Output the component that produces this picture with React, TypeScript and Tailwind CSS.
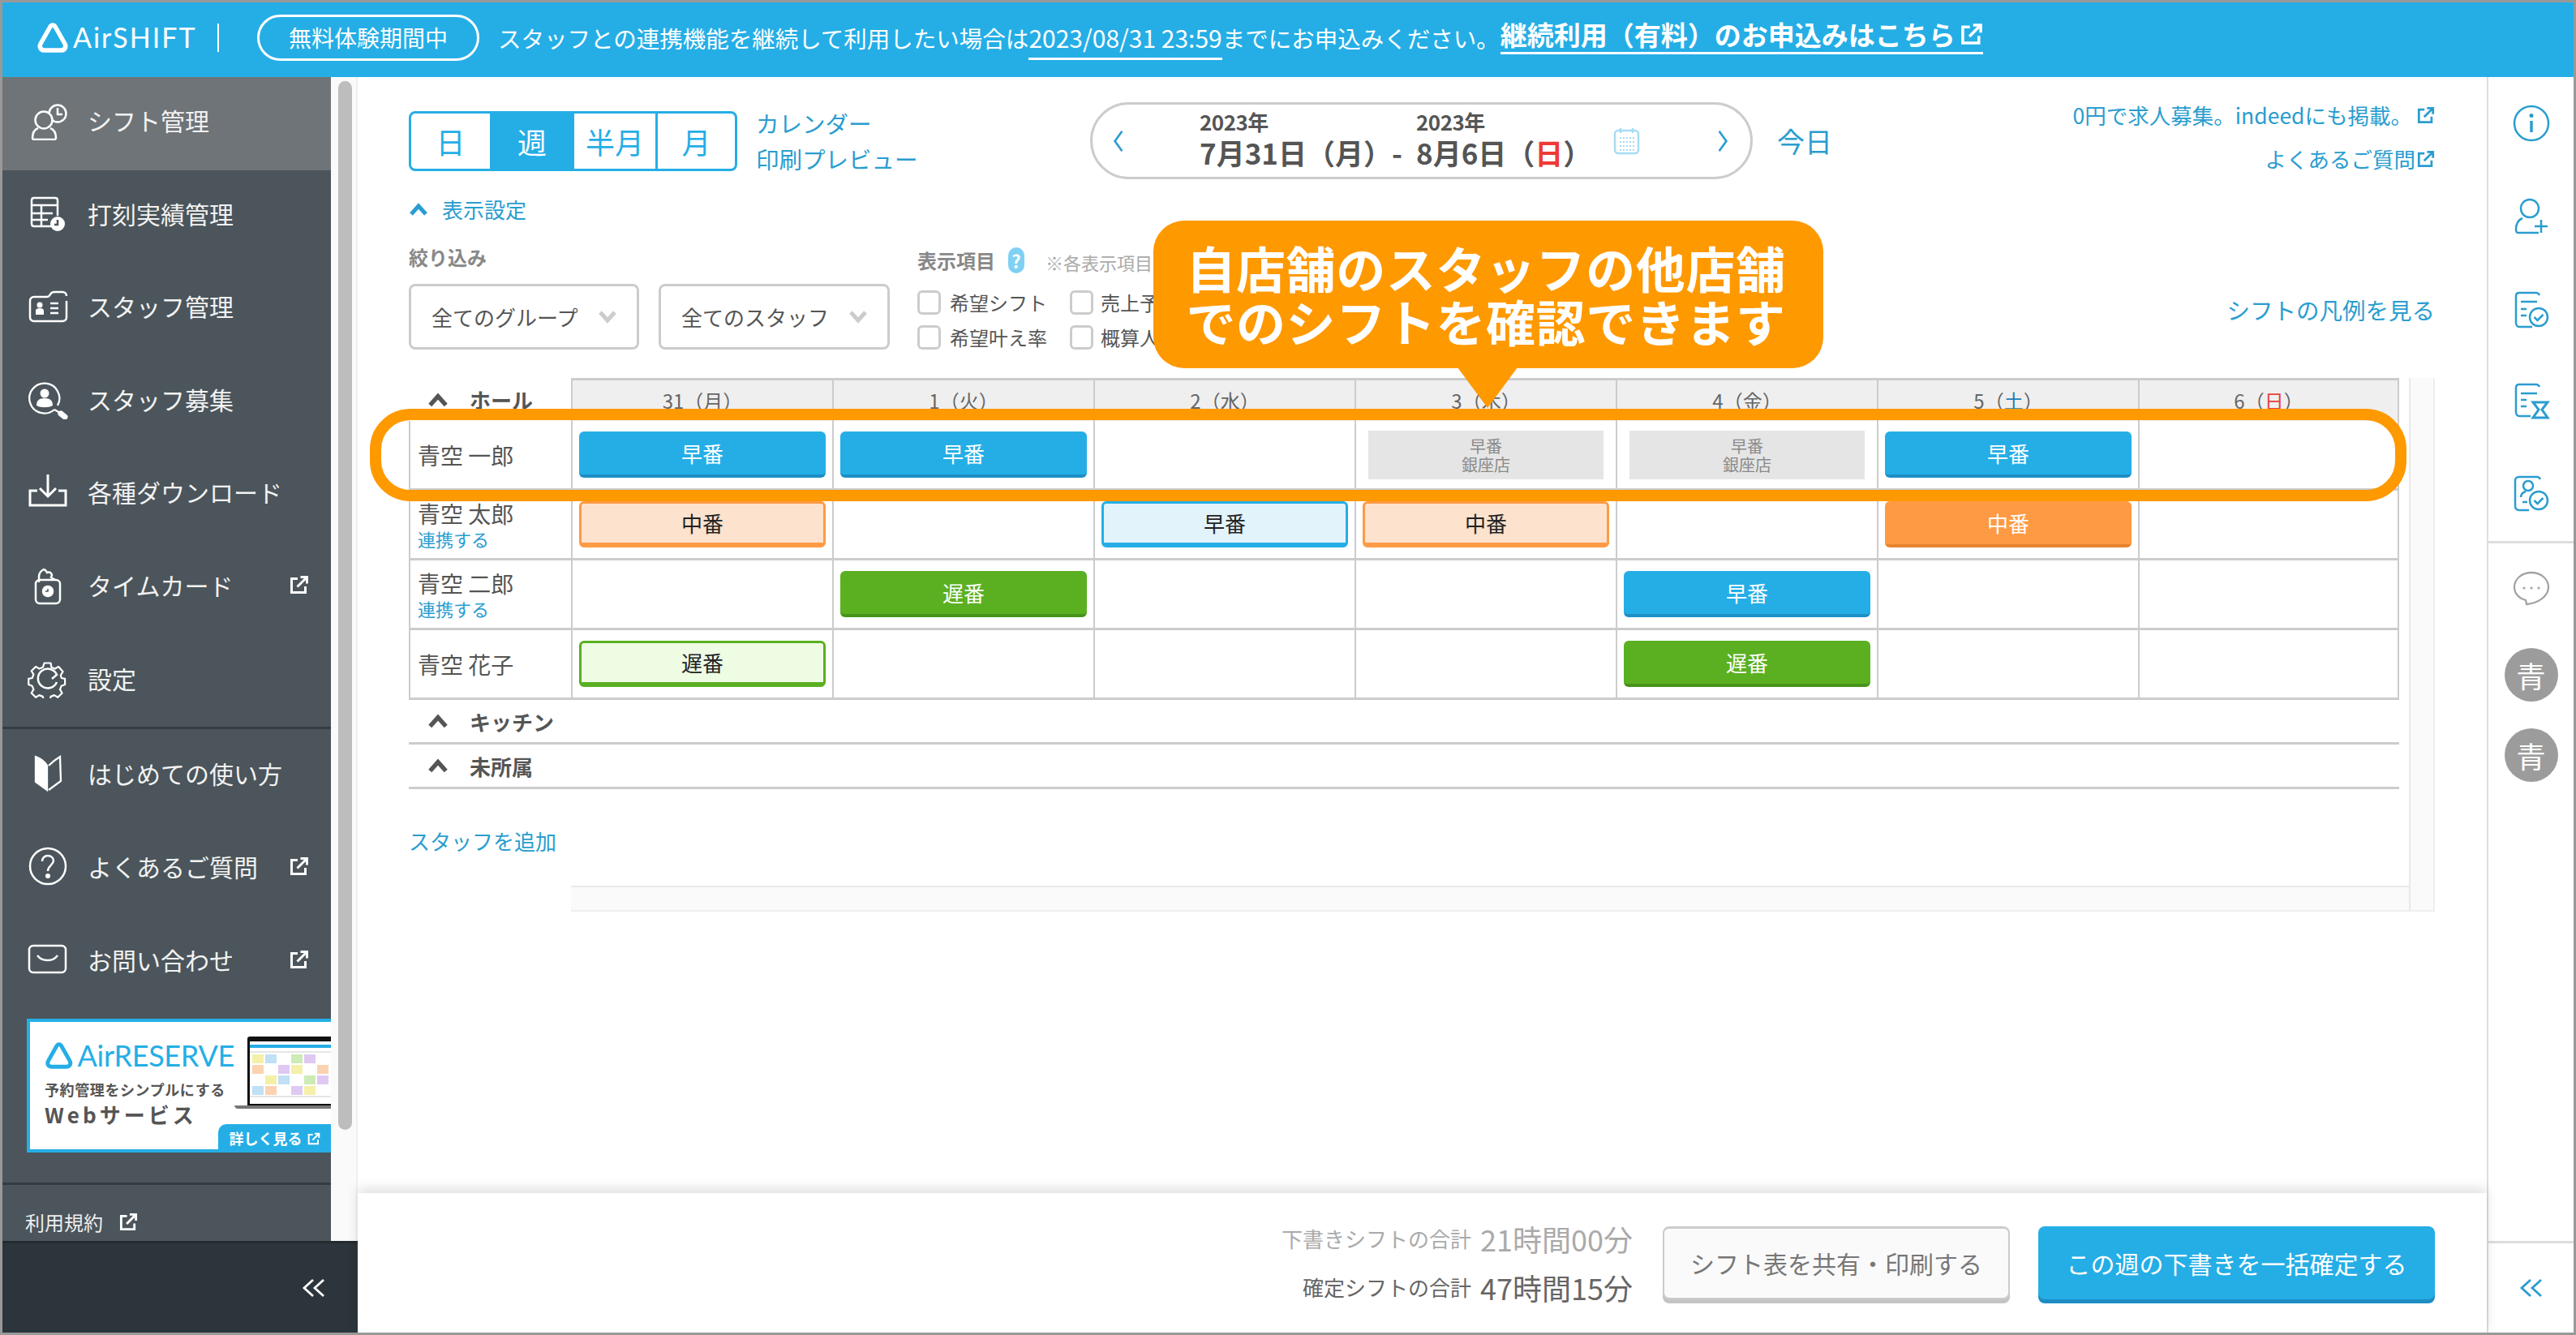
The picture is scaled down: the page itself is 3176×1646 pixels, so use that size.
import { ReactNode } from 'react';

const DAYS: Array<[string, string, string]> = [
  ['31', '月', ''],
  ['1', '火', ''],
  ['2', '水', ''],
  ['3', '木', ''],
  ['4', '金', ''],
  ['5', '土', 'text-[#1f7fb8]'],
  ['6', '日', 'text-[#e8403c]'],
];

type PillKind = 'blue' | 'blueLight' | 'orange' | 'orangeLight' | 'green' | 'greenLight' | 'other';
type Shift = { day: number; kind: PillKind; label: string };

const PILL_CLASS: Record<PillKind, string> = {
  blue: 'bg-[#25aee6] border-b-[4px] border-[#1c8fc6] text-white',
  blueLight: 'bg-[#e3f3fc] border-[3px] border-b-[6px] border-[#25aee6] text-[#222]',
  orange: 'bg-[#ff9a44] border-b-[4px] border-[#e8842e] text-white',
  orangeLight: 'bg-[#fde2cd] border-[3px] border-b-[6px] border-[#ff9a44] text-[#222]',
  green: 'bg-[#5ab021] border-b-[4px] border-[#46941a] text-white',
  greenLight: 'bg-[#eefce4] border-[3px] border-b-[6px] border-[#5ab021] text-[#222]',
  other: '',
};

const STAFF: Array<{ name: string; link: boolean; shifts: Shift[] }> = [
  {
    name: '青空 一郎',
    link: false,
    shifts: [
      { day: 0, kind: 'blue', label: '早番' },
      { day: 1, kind: 'blue', label: '早番' },
      { day: 3, kind: 'other', label: '早番' },
      { day: 4, kind: 'other', label: '早番' },
      { day: 5, kind: 'blue', label: '早番' },
    ],
  },
  {
    name: '青空 太郎',
    link: true,
    shifts: [
      { day: 0, kind: 'orangeLight', label: '中番' },
      { day: 2, kind: 'blueLight', label: '早番' },
      { day: 3, kind: 'orangeLight', label: '中番' },
      { day: 5, kind: 'orange', label: '中番' },
    ],
  },
  {
    name: '青空 二郎',
    link: true,
    shifts: [
      { day: 1, kind: 'green', label: '遅番' },
      { day: 4, kind: 'blue', label: '早番' },
    ],
  },
  {
    name: '青空 花子',
    link: false,
    shifts: [
      { day: 0, kind: 'greenLight', label: '遅番' },
      { day: 4, kind: 'green', label: '遅番' },
    ],
  },
];

function ExternalIcon({ className }: { className: string }) {
  return (
    <svg viewBox="0 0 24 24" fill="none" stroke="currentColor" strokeWidth="3" className={className}>
      <path d="M10 4.5H2.5v17h17V14" />
      <path d="M9.5 14.5 21 3M13.5 2.5h8v8" />
    </svg>
  );
}

function Chevron({ className }: { className: string }) {
  return (
    <svg viewBox="0 0 24 16" fill="none" stroke="currentColor" strokeWidth="5" className={className}>
      <path d="M3 14 12 4l9 10" />
    </svg>
  );
}

function AirLogo({ className }: { className: string }) {
  return (
    <svg viewBox="0 0 40 38" fill="none" stroke="currentColor" strokeWidth="5.500" strokeLinejoin="round" className={className}>
      <path d="M20 4c-1.800 0-3 1.500-4 3.500L5 27c-2 4 0 8 5 8h20c5 0 7-4 5-8L24 7.500C23 5.500 21.800 4 20 4Z" />
    </svg>
  );
}

const navIcon = 'w-[50px] h-[50px]';

const ICONS: Record<string, ReactNode> = {
  shift: (
    <svg viewBox="0 0 50 50" fill="none" stroke="currentColor" strokeWidth="2.500" className={navIcon}>
      <circle cx="37" cy="17" r="10.500" />
      <path d="M37 10v8h6" />
      <circle cx="20" cy="25" r="10.500" fill="#6e7478" />
      <path d="M13 35c-5 2-7 6-7 12 0 1 1 2 2 2h25c1 0 2-1 2-2 0-6-2-10-7-12" />
    </svg>
  ),
  stamp: (
    <svg viewBox="0 0 50 50" fill="none" stroke="currentColor" strokeWidth="2.500" className={navIcon}>
      <path d="M29 41H8c-2 0-3-1-3-3V9c0-2 1-3 3-3h26c2 0 3 1 3 3v19" />
      <path d="M5 15h32M5 25h26M5 33h20M17 15v26" />
      <circle cx="37" cy="38" r="9" fill="#fff" stroke="none" />
      <path d="M37 33v6h-4" stroke="#4b555b" />
    </svg>
  ),
  staff: (
    <svg viewBox="0 0 50 50" fill="none" stroke="currentColor" strokeWidth="2.500" className={navIcon}>
      <path d="M8 14h16c2 0 3-1 4-3 1-2 3-3 5-3h10c3 0 5 2 5 5" />
      <path d="M48 19v20c0 3-2 5-5 5H8c-3 0-5-2-5-5V19c0-3 2-5 5-5" />
      <circle cx="15" cy="24" r="3.500" fill="currentColor" stroke="none" />
      <path d="M10 36v-5c0-2 2-3 5-3s5 1 5 3v5Z" fill="currentColor" stroke="none" />
      <path d="M28 22h10M28 28h10M28 34h10" />
    </svg>
  ),
  search: (
    <svg viewBox="0 0 50 50" fill="none" stroke="currentColor" strokeWidth="2.300" className={navIcon}>
      <path d="M33 38a18.500 18.500 0 1 1 4-5" />
      <circle cx="21" cy="18" r="5.500" fill="currentColor" stroke="none" />
      <path d="M11 33c0-6 3-9 10-9s10 3 10 9c-5 3-15 3-20 0Z" fill="currentColor" stroke="none" />
      <path d="M33 38l7 4" />
      <path d="M41 43l5 4" strokeWidth="7" strokeLinecap="round" />
    </svg>
  ),
  download: (
    <svg viewBox="0 0 50 50" fill="none" stroke="currentColor" strokeWidth="3" className={navIcon}>
      <path d="M12 24H3v18h44V24h-9" />
      <path d="M25 4v26M15 21l10 10 10-10" />
    </svg>
  ),
  card: (
    <svg viewBox="0 0 50 50" fill="none" stroke="currentColor" strokeWidth="2.500" className={navIcon}>
      <path d="M14 22V15c0-4 2-7 6-9 3 1 3 2 4 4 3-1 5 0 6 3l-1 3 5 3" />
      <rect x="10" y="19" width="30" height="29" rx="5" />
      <circle cx="25" cy="33" r="6" fill="currentColor" />
      <path d="M25 30v3h-3" stroke="#4b555b" strokeWidth="1.500" />
    </svg>
  ),
  gear: (
    <svg viewBox="0 0 50 50" fill="none" stroke="currentColor" strokeWidth="2.500" className={navIcon}>
      <path d="M20 4h9l1 6 5 2 5-3 6 7-3 5 1 4 5 1v8l-5 2-2 5 3 5-6 6-5-3-5 2-1 5h-9l-1-5-5-2-5 3-6-6 3-5-2-5-5-2v-8l5-1 2-5-3-5 6-6 5 3 5-2Z" transform="translate(3 3) scale(.88)" strokeLinejoin="round" />
      <path d="M36 21a12 12 0 1 0 0 9M30 26l7-6" />
    </svg>
  ),
  book: (
    <svg viewBox="0 0 50 50" fill="none" stroke="currentColor" strokeWidth="2.300" className={navIcon}>
      <path d="M10 5c6 2 11 6 14 11v30L10 36Z" fill="currentColor" />
      <path d="M26 16c4-4 9-8 14-11l1 30-15 11" />
    </svg>
  ),
  help: (
    <svg viewBox="0 0 50 50" fill="none" stroke="currentColor" strokeWidth="2.500" className={navIcon}>
      <circle cx="25" cy="25" r="22" />
      <path d="M18 19c0-4 3-7 7-7s7 3 7 6c0 6-7 6-7 13" />
      <circle cx="25" cy="37" r="1.800" fill="currentColor" />
    </svg>
  ),
  mail: (
    <svg viewBox="0 0 50 50" fill="none" stroke="currentColor" strokeWidth="2.500" className={navIcon}>
      <rect x="2" y="8" width="45" height="33" rx="5" />
      <path d="M12 20c3 4 8 6 13 6s9-2 12-6" />
    </svg>
  ),
};

function NavItem({ icon, label, ext, active, cls }: { icon: string; label: string; ext?: boolean; active?: boolean; cls: string }) {
  return (
    <div className={`flex items-center pl-[27px] pr-[27px] text-[30px] text-[#f2f2f2] ${cls} ${active ? 'bg-[#6e7478]' : ''}`}>
      <div className="w-[58px] flex justify-center text-white">{ICONS[icon]}</div>
      <span className="ml-[20px] flex-1 whitespace-nowrap leading-none">{label}</span>
      {ext && <ExternalIcon className="w-[24px] h-[24px] text-white" />}
    </div>
  );
}

function Laptop() {
  const colors = ['#f4f0a8', '#bfe0f5', '#fbd3b0', '#cdebb6', '#dfc9f2'];
  const cells = [] as ReactNode[];
  for (let c = 0; c < 6; c++) {
    for (let r = 0; r < 4; r++) {
      if ((c + r) % 3 === 2) continue;
      cells.push(<rect key={`${c}-${r}`} x={22 + c * 16} y={22 + r * 13} width="14" height="11" fill={colors[(c + r * 2) % 5]} />);
    }
  }
  return (
    <svg viewBox="0 0 119 92" className="w-[119px] h-[92px]">
      <rect x="16" y="0" width="120" height="88" rx="3" fill="#111" />
      <rect x="19" y="6" width="110" height="77" fill="#fff" />
      <rect x="19" y="10" width="110" height="4" fill="#25aee6" />
      {cells}
      <path d="M19 19h100M19 74h100" stroke="#ccc" strokeWidth="1" />
      <path d="M0 85h119v4H4c-2 0-4-2-4-4Z" fill="#777" />
    </svg>
  );
}

function Banner() {
  return (
    <div className="relative ml-[30px] mt-[12px] h-[165px] w-[375px] border-[4px] border-r-0 border-[#25aee6] bg-white flex">
      <div className="pl-[18px] pt-[23px] w-[252px] shrink-0 font-['Noto_Sans_CJK_JP',sans-serif]">
        <div className="flex items-center text-[#25aee6]">
          <AirLogo className="w-[38px] h-[36px]" />
          <span className="ml-[5px] font-['Lato',sans-serif] text-[36px] leading-none tracking-[-0.3px]">AirRESERVE</span>
        </div>
        <div className="mt-[15px] text-[18px] font-bold leading-none text-[#555] tracking-[0.6px] whitespace-nowrap">予約管理をシンプルにする</div>
        <div className="mt-[9px] text-[26px] font-bold leading-none text-[#555] tracking-[4px] whitespace-nowrap">Webサービス</div>
      </div>
      <div className="pt-[18px] overflow-hidden w-[119px]"><Laptop /></div>
      <div className="absolute right-0 bottom-[-4px] h-[35px] w-[139px] rounded-tl-[10px] bg-[#25aee6] flex items-center justify-center gap-[6px] text-white text-[18px] font-bold">
        詳しく見る
        <ExternalIcon className="w-[16px] h-[16px]" />
      </div>
    </div>
  );
}

function Sidebar() {
  return (
    <div className="w-[438px] shrink-0 flex flex-col">
      <div className="flex h-[1435px]">
        <div className="w-[405px] bg-[#4b555b] flex flex-col">
          <div className="border-b-[3px] border-[#333d43]">
            <NavItem icon="shift" label="シフト管理" active cls="h-[114.500px] pb-[8px]" />
            <NavItem icon="stamp" label="打刻実績管理" cls="h-[114.500px] pb-[8px]" />
            <NavItem icon="staff" label="スタッフ管理" cls="h-[114.500px] pb-[8px]" />
            <NavItem icon="search" label="スタッフ募集" cls="h-[114.500px] pb-[8px]" />
            <NavItem icon="download" label="各種ダウンロード" cls="h-[114.500px] pb-[8px]" />
            <NavItem icon="card" label="タイムカード" ext cls="h-[114.500px] pb-[8px]" />
            <NavItem icon="gear" label="設定" cls="h-[114px] pb-[6px]" />
          </div>
          <NavItem icon="book" label="はじめての使い方" cls="h-[115px] pb-[8px]" />
          <NavItem icon="help" label="よくあるご質問" ext cls="h-[115px] pb-[8px]" />
          <NavItem icon="mail" label="お問い合わせ" ext cls="h-[115px] pb-[8px]" />
          <Banner />
          <div className="mt-[37px] border-t-[3px] border-[#333d43] flex-1 flex items-center pl-[28px] pt-[22px] text-[24px] text-[#eee]">
            利用規約
            <ExternalIcon className="ml-[20px] w-[23px] h-[23px] text-white" />
          </div>
        </div>
        <div className="w-[33px] bg-[#fafafa] border-r-[2px] border-[#f0f0f0]">
          <div className="ml-[9px] mt-[5px] h-[1293px] w-[17px] rounded-full bg-[#bdbdbd]" />
        </div>
      </div>
      <div className="flex-1 bg-[#2c353b] border-t-[3px] border-[#232b30] flex items-center justify-end pr-[39px] text-white">
        <DoubleLeft className="w-[30px] h-[26px]" />
      </div>
    </div>
  );
}

function DoubleLeft({ className }: { className: string }) {
  return (
    <svg viewBox="0 0 30 26" fill="none" stroke="currentColor" strokeWidth="2.800" className={className}>
      <path d="M14 3 3 13l11 10M27 3 16 13l11 10" />
    </svg>
  );
}

function Toolbar() {
  return (
    <div className="flex items-center h-[95px] mt-[31px]">
      <div className="w-[405px] h-[74px] flex rounded-[8px] border-[3px] border-[#25aee6] text-[#25aee6] text-[36px] overflow-hidden leading-none">
        <div className="w-[97px] flex items-center justify-center">日</div>
        <div className="w-[104px] flex items-center justify-center bg-[#25aee6] text-white">週</div>
        <div className="w-[100px] flex items-center justify-center">半月</div>
        <div className="flex-1 flex items-center justify-center border-l-[3px] border-[#25aee6]">月</div>
      </div>
      <div className="w-[435px] pl-[23px] text-[#2a9dcf] text-[28.500px] leading-[44px] whitespace-nowrap">
        <div>カレンダー</div>
        <div>印刷プレビュー</div>
      </div>
      <div className="w-[817px] h-[95px] shrink-0 rounded-[48px] border-[3px] border-[#ccc] flex items-center text-[#555]">
        <svg viewBox="0 0 16 34" fill="none" stroke="#2a9dcf" strokeWidth="3" className="ml-[24px] w-[16px] h-[30px]">
          <path d="M13 3 3 17l10 14" />
        </svg>
        <div className="ml-[92px] -mt-[6px] w-[500px] flex flex-col whitespace-nowrap">
          <div className="flex text-[26px] leading-none font-bold tracking-[-0.5px]">
            <span className="w-[267px]">2023年</span>
            <span>2023年</span>
          </div>
          <div className="flex text-[35px] leading-none font-bold mt-[7px]">
            <span className="w-[267px] flex justify-between pr-[18px]">
              <span>7月31日（月）</span>
              <span>-</span>
            </span>
            <span>8月6日（<span className="text-[#ee3a35]">日</span>）</span>
          </div>
        </div>
        <svg viewBox="0 0 36 36" fill="none" stroke="#a6dcf4" strokeWidth="2.500" className="ml-[9px] w-[36px] h-[36px]">
          <rect x="3" y="5" width="29" height="28" rx="4" />
          <path d="M10 2v6M25 2v6" />
          <path d="M9 14h18M9 19h18M9 24h18M9 29h18" strokeDasharray="2 2" strokeWidth="2" />
        </svg>
        <svg viewBox="0 0 16 34" fill="none" stroke="#2a9dcf" strokeWidth="3" className="ml-[92px] w-[16px] h-[30px]">
          <path d="M3 3l10 14L3 31" />
        </svg>
      </div>
      <div className="ml-[30px] text-[34px] text-[#2a9dcf] leading-none">今日</div>
      <div className="flex-1 flex flex-col items-end text-[26.500px] text-[#2a9dcf] leading-[54px] whitespace-nowrap -mt-[10px]">
        <div className="flex items-center gap-[6px]">0円で求人募集。indeedにも掲載。<ExternalIcon className="w-[22px] h-[24px]" /></div>
        <div className="flex items-center gap-[2px]">よくあるご質問<ExternalIcon className="w-[22px] h-[24px]" /></div>
      </div>
    </div>
  );
}

function Filters() {
  const select = 'h-[81px] rounded-[8px] border-[3px] border-[#ccc] flex items-center justify-between pl-[25px] pr-[24px] text-[26px] text-[#555] whitespace-nowrap';
  const check = 'w-[29px] h-[30px] rounded-[6px] border-[3px] border-[#ccc] bg-white shrink-0';
  return (
    <div className="flex h-[126px] mt-[32px]">
      <div className="w-[627px] flex flex-col shrink-0">
        <div className="h-[45px] text-[24px] font-bold text-[#888] leading-[24px]">絞り込み</div>
        <div className="flex gap-[24px]">
          <div className={`w-[284px] ${select}`}>
            全てのグループ
            <Chevron className="w-[24px] h-[16px] rotate-180 text-[#ccc]" />
          </div>
          <div className={`w-[285px] ${select}`}>
            全てのスタッフ
            <Chevron className="w-[24px] h-[16px] rotate-180 text-[#ccc]" />
          </div>
        </div>
      </div>
      <div className="w-[290px] flex flex-col shrink-0">
        <div className="h-[54px] flex items-start whitespace-nowrap">
          <span className="text-[24px] font-bold text-[#888] mt-[2px] leading-[28px]">表示項目</span>
          <span className="ml-[16px] w-[30px] h-[32px] rounded-full bg-[#7fd0f3] text-white text-[22px] font-bold flex items-center justify-center">?</span>
          <span className="ml-[26px] text-[22px] text-[#aaa] mt-[5px] leading-[26px]">※各表示項目</span>
        </div>
        <div className="grid grid-cols-[188px_1fr] gap-y-[13px] text-[24px] text-[#555] leading-none whitespace-nowrap">
          <div className="flex items-center gap-[11px]"><span className={check} />希望シフト</div>
          <div className="flex items-center gap-[9px]"><span className={check} />売上予</div>
          <div className="flex items-center gap-[11px]"><span className={check} />希望叶え率</div>
          <div className="flex items-center gap-[9px]"><span className={check} />概算人</div>
        </div>
      </div>
      <div className="flex-1 flex justify-end items-end pb-[35px] text-[28.500px] text-[#2a9dcf] leading-none">シフトの凡例を見る</div>
    </div>
  );
}

function ShiftPill({ shift }: { shift: Shift }) {
  if (shift.kind === 'other') {
    return (
      <div className="mx-[7px] h-[60px] w-full bg-[#e5e5e5] text-[#8a8a8a] text-[20px] leading-[23px] text-center flex flex-col justify-center">
        <div>{shift.label}</div>
        <div>銀座店</div>
      </div>
    );
  }
  return (
    <div className={`w-full h-[57px] rounded-[6px] flex items-center justify-center text-[26px] leading-none ${PILL_CLASS[shift.kind]}`}>
      {shift.label}
    </div>
  );
}

function ShiftTable() {
  return (
    <div className="w-[2454px]">
      <div className="grid grid-cols-[200px_repeat(7,322px)] h-[53px]">
        <div className="flex items-center pl-[23px] gap-[26px] text-[26px] font-bold text-[#555]">
          <Chevron className="w-[26px] h-[18px]" />
          ホール
        </div>
        {DAYS.map(([d, w, color]) => (
          <div key={d} className="bg-[#efefef] border-t-[3px] border-l-[2px] last:border-r-[2px] border-[#ccc] flex items-center justify-center text-[24px] text-[#666] leading-none">
            {d}（<span className={color}>{w}</span>）
          </div>
        ))}
      </div>
      {STAFF.map((s) => (
        <div key={s.name} className="grid grid-cols-[200px_repeat(7,322px)] h-[86px] border-b-[3px] border-t-0 border-[#ccc] first:border-t-[3px] first:h-[88px]">
          <div className="border-l-[2px] border-[#ccc] pl-[9px] flex flex-col justify-center text-[#555] text-[28px] leading-[34px]">
            <span className={s.link ? '-mt-[5px]' : ''}>{s.name}</span>
            {s.link && <span className="text-[22px] text-[#2a9dcf] leading-[28px] -mb-[6px]">連携する</span>}
          </div>
          {DAYS.map((_, i) => {
            const shift = s.shifts.find((x) => x.day === i);
            return (
              <div key={i} className="border-l-[2px] last:border-r-[2px] border-[#ccc] px-[8px] flex items-center justify-center">
                {shift && <ShiftPill shift={shift} />}
              </div>
            );
          })}
        </div>
      ))}
      <GroupRow label="キッチン" />
      <GroupRow label="未所属" />
    </div>
  );
}

function GroupRow({ label }: { label: string }) {
  return (
    <div className="h-[55px] border-b-[3px] border-[#ccc] flex items-center pl-[23px] gap-[26px] text-[26px] font-bold text-[#555]">
      <Chevron className="w-[26px] h-[18px]" />
      {label}
    </div>
  );
}

function FooterBar() {
  return (
    <div className="h-[172px] shrink-0 bg-white shadow-[0_-6px_14px_rgba(0,0,0,0.12)] flex items-center justify-end pr-[64px] relative">
      <div className="flex flex-col items-end whitespace-nowrap leading-none gap-[24px]">
        <div className="flex items-center gap-[11px] text-[#aaa]">
          <span className="text-[26px]">下書きシフトの合計</span>
          <span className="text-[36px]">21時間00分</span>
        </div>
        <div className="flex items-center gap-[11px] text-[#666]">
          <span className="text-[26px]">確定シフトの合計</span>
          <span className="text-[36px]">47時間15分</span>
        </div>
      </div>
      <div className="ml-[37px] w-[428px] h-[90px] rounded-[8px] bg-[#fafafa] border-[2px] border-t-[3px] border-[#ccc] shadow-[0_5px_0_#c4c4c4] flex items-center justify-center text-[30px] text-[#777]">
        シフト表を共有・印刷する
      </div>
      <div className="ml-[35px] w-[489px] h-[90px] rounded-[8px] bg-[#25aee6] shadow-[0_5px_0_#1d8dc3] flex items-center justify-center text-[30px] text-white">
        この週の下書きを一括確定する
      </div>
    </div>
  );
}

const railIcon = 'w-[46px] h-[46px]';

function RightRail() {
  return (
    <div className="w-[107px] shrink-0 border-l-[2px] border-[#ddd] flex flex-col items-stretch text-[#2a9dcf]">
      <div className="pb-[2px] border-b-[3px] border-[#ddd]">
        <div className="h-[114px] flex items-center justify-center">
          <svg viewBox="0 0 46 46" fill="none" stroke="currentColor" strokeWidth="2.500" className={railIcon}>
            <circle cx="23" cy="23" r="21" />
            <circle cx="23" cy="13.500" r="2.500" fill="currentColor" stroke="none" />
            <path d="M23 20v14" strokeWidth="3.500" />
          </svg>
        </div>
        <div className="h-[116px] flex items-center justify-center">
          <svg viewBox="0 0 46 46" fill="none" stroke="currentColor" strokeWidth="2.500" className={railIcon}>
            <circle cx="21" cy="13" r="11" />
            <path d="M12 25c-5 2-8 7-8 14 0 2 1 4 2 4h26" />
            <path d="M27 35h16M35 27v16" />
          </svg>
        </div>
        <div className="h-[114px] flex items-center justify-center">
          <svg viewBox="0 0 46 46" fill="none" stroke="currentColor" strokeWidth="2.500" className={railIcon}>
            <path d="M33 5c-1-2-2-3-4-3H8C5 2 4 4 4 6v33c0 3 2 5 4 5h16" />
            <path d="M10 13h20M10 22h7M10 30h7" />
            <circle cx="32" cy="32" r="11" />
            <path d="M26.500 32l4 4 7-7" />
          </svg>
        </div>
        <div className="h-[112px] flex items-center justify-center">
          <svg viewBox="0 0 46 46" fill="none" stroke="currentColor" strokeWidth="2.500" className={railIcon}>
            <path d="M33 5c-1-2-2-3-4-3H8C5 2 4 4 4 6v30c0 3 2 5 4 5h14" />
            <path d="M10 13h20M10 21h7M10 29h7" />
            <path d="M25 24h18l-7 9 7 10H25l7-10Z" strokeWidth="3" />
          </svg>
        </div>
        <div className="h-[114px] flex items-center justify-center">
          <svg viewBox="0 0 46 46" fill="none" stroke="currentColor" strokeWidth="2.500" className={railIcon}>
            <path d="M34 6c-1-2-2-3-4-3H8C5 3 3 5 3 7v32c0 3 2 5 5 5h12" />
            <circle cx="19" cy="14" r="6" />
            <path d="M12 34h6M10 28c0-4 3-6 6-7" />
            <circle cx="32" cy="32" r="11" />
            <path d="M26.500 32l4 4 7-7" />
          </svg>
        </div>
      </div>
      <div className="h-[108px] pt-[4px] flex items-center justify-center">
        <svg viewBox="0 0 46 46" fill="none" stroke="#a3a3a3" strokeWidth="2.300" className={railIcon}>
          <path d="M23 3C11 3 2 11 2 21c0 8 6 14 14 16l1 5c13-1 27-9 27-21C44 11 35 3 23 3Z" />
          <circle cx="14" cy="22" r="1.600" fill="#a3a3a3" stroke="none" />
          <circle cx="23" cy="22" r="1.600" fill="#a3a3a3" stroke="none" />
          <circle cx="32" cy="22" r="1.600" fill="#a3a3a3" stroke="none" />
        </svg>
      </div>
      <div className="mx-auto mt-[21px] w-[66px] h-[66px] rounded-full bg-[#9c9c9c] text-white text-[36px] flex items-center justify-center leading-none">青</div>
      <div className="mx-auto mt-[33px] w-[66px] h-[66px] rounded-full bg-[#9c9c9c] text-white text-[36px] flex items-center justify-center leading-none">青</div>
      <div className="mt-auto h-[113px] border-t-[3px] border-[#ddd] flex items-center justify-center">
        <DoubleLeft className="w-[30px] h-[26px]" />
      </div>
    </div>
  );
}

function Content() {
  return (
    <div className="flex-1 min-w-0 flex flex-col">
      <div className="flex-1 min-h-0 pl-[63px] pr-[64px] flex flex-col">
        <Toolbar />
        <div className="mt-[22px] h-[30px] flex items-center gap-[17px] text-[26px] text-[#2a9dcf] leading-none">
          <Chevron className="w-[24px] h-[16px]" />
          表示設定
        </div>
        <Filters />
        <div className="mt-[35px] flex h-[658px]">
          <div className="w-[2466px] flex flex-col">
            <ShiftTable />
            <div className="mt-[51px] text-[26px] text-[#2a9dcf] leading-none">スタッフを追加</div>
            <div className="mt-auto ml-[200px] h-[32px] bg-[#fafafa] border-t-[2px] border-b-[2px] border-t-[#e8e8e8] border-b-[#eee]" />
          </div>
          <div className="w-[32px] bg-[#fafafa] border-l-[2px] border-r-[2px] border-b-[2px] border-l-[#e8e8e8] border-r-[#eee] border-b-[#eee]" />
        </div>
      </div>
      <FooterBar />
    </div>
  );
}

export default function App() {
  return (
    <div className="relative w-[3176px] h-[1646px] overflow-hidden bg-white border-[3px] border-[#999] flex flex-col font-['Noto_Sans_CJK_JP','Noto_Sans',sans-serif]">
      <div className="h-[92px] shrink-0 bg-[#25aee6] flex items-center text-white whitespace-nowrap pl-[42px] pb-[6px]">
        <AirLogo className="w-[40px] h-[38px] -mt-[1px]" />
        <span className="ml-[5px] w-[178px] font-['Lato',sans-serif] text-[34px] leading-none tracking-[2px]">AirSHIFT</span>
        <span className="w-[2px] h-[35px] bg-white" />
        <div className="ml-[47px] w-[274px] h-[57px] rounded-full border-[3px] border-white flex items-center justify-center text-[28px] leading-none">無料体験期間中</div>
        <span className="ml-[23px] text-[28.500px] leading-none">
          スタッフとの連携機能を継続して利用したい場合は
          <span className="text-[30px] border-b-[3px] border-white pb-[3px]">2023/08/31 23:59</span>
          までにお申込みください。
        </span>
        <div className="ml-[1px] flex items-center gap-[6px] border-b-[3px] border-white pb-[4px] text-[33px] font-bold leading-[36px] -mt-[2px]">
          継続利用（有料）のお申込みはこちら
          <ExternalIcon className="w-[28px] h-[30px]" />
        </div>
      </div>
      <div className="flex-1 min-h-0 flex">
        <Sidebar />
        <Content />
        <RightRail />
      </div>

      <div className="absolute left-[453px] top-[501px] w-[2511px] h-[114px] rounded-[50px] border-[14px] border-[#ff9900]" />
      <div className="absolute left-[1419px] top-[269px] w-[826px] h-[182px] rounded-[38px] bg-[#ff9900] flex flex-col items-center justify-center pr-[6px] text-white text-[61px] font-bold leading-[66px] tracking-[0.6px] whitespace-nowrap">
        <div>自店舗のスタッフの他店舗</div>
        <div>でのシフトを確認できます</div>
      </div>
      <svg viewBox="0 0 74 50" className="absolute left-[1794px] top-[450px] w-[74px] h-[50px]">
        <path d="M0 0h74L37 50Z" fill="#ff9900" />
      </svg>
    </div>
  );
}
